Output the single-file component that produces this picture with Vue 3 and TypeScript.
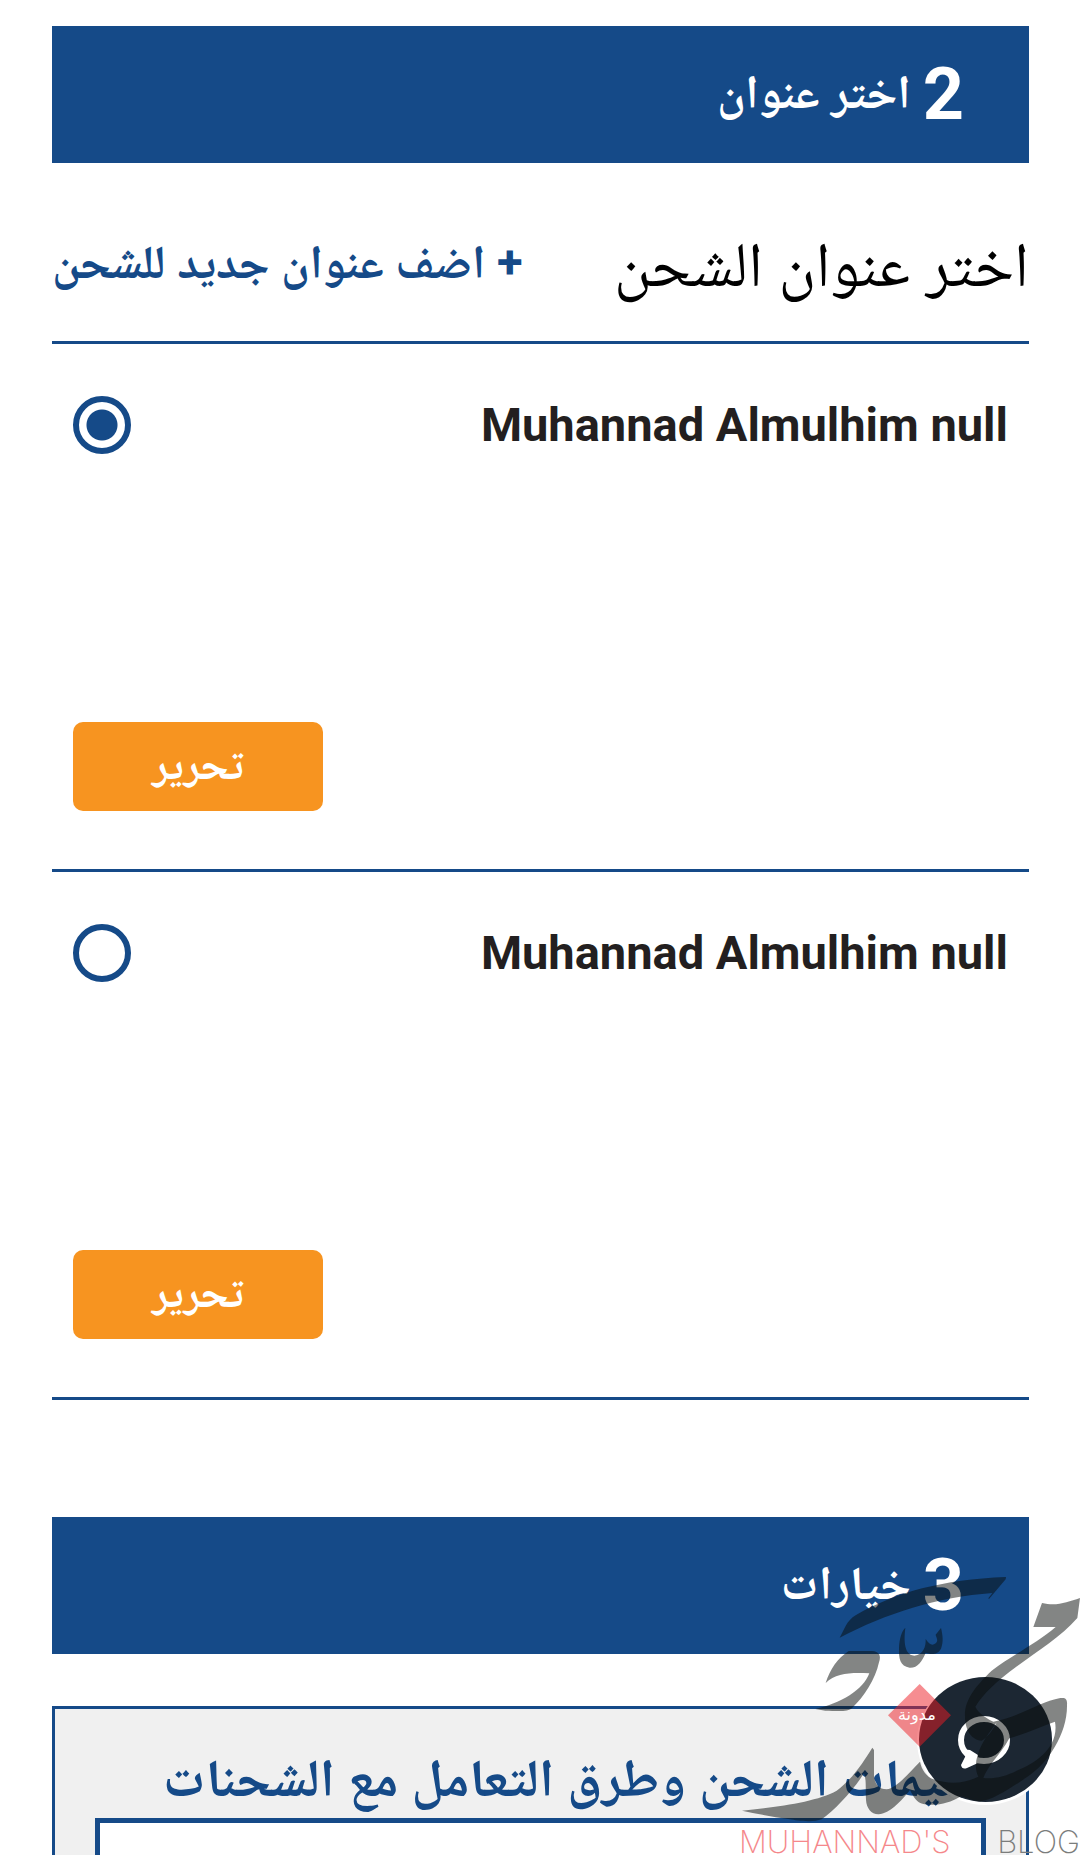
<script setup lang="ts">
import { ref } from 'vue'

interface Address {
  id: number
  name: string
}

const addresses: Address[] = [
  { id: 1, name: 'Muhannad Almulhim null' },
  { id: 2, name: 'Muhannad Almulhim null' },
]

const selected = ref<number>(1)
const instructions = ref<string>('')
</script>

<template>
  <div class="page" dir="rtl" lang="ar">
    <main class="content">
      <h2 class="step"><span class="num">2</span><span class="step-name">اختر عنوان</span></h2>

      <div class="title-row">
        <h3 class="title">اختر عنوان الشحن</h3>
        <a class="add" href="#new-address">+ اضف عنوان جديد للشحن</a>
      </div>

      <ul class="addresses">
        <li v-for="address in addresses" :key="address.id" class="address">
          <div class="address-head">
            <label class="name" :for="`address-${address.id}`">{{ address.name }}</label>
            <input
              :id="`address-${address.id}`"
              v-model="selected"
              class="radio"
              type="radio"
              name="address"
              :value="address.id"
            />
          </div>
          <button class="edit" type="button">تحرير</button>
        </li>
      </ul>

      <h2 class="step"><span class="num">3</span><span class="step-name">خيارات</span></h2>

      <section class="options">
        <label class="options-label" for="instructions">تعليمات الشحن وطرق التعامل مع الشحنات</label>
        <textarea id="instructions" v-model="instructions" class="instructions"></textarea>
      </section>
    </main>

    <button class="chat" type="button" aria-label="الدردشة">
      <svg viewBox="0 0 54 54" width="54" height="54" aria-hidden="true">
        <ellipse cx="26" cy="24" rx="23" ry="21" fill="none" stroke="#fff" stroke-width="6" />
        <path d="M3 33L8 39L3 49Q4 54 9 52L20 47V39L12 34Z" fill="#fff" />
      </svg>
    </button>

    <div class="watermark" aria-hidden="true">
      <svg class="brush" viewBox="0 0 1080 1065">
        <g fill="#070b09" fill-opacity="0.5" fill-rule="evenodd">
          <path d="M359 413C374 388 378 363 408 345C530 276 665 239 858 231L857 238L807 297L805 295L817 279C650 291 500 340 359 413Z" />
          <path d="M556 383C553 410 548 464 583 467C610 464 618 440 617 417C628 434 637 438 647 430C657 421 648 412 647 404L663 384C668 405 671 425 663 446C653 466 630 463 617 458C606 485 593 504 569 503C540 499 536 475 537 445C538 415 545 394 556 383Z" />
          <path d="M317 549C331 506 353 475 386 453H455C478 454 484 467 477 487C466 538 432 591 397 623C383 637 350 632 316 632L286 627C363 610 430 570 448 520C397 517 348 518 317 549Z" />
          <path d="M457 743L462 750V830C465 850 475 868 500 868C530 865 570 815 600 785C605 810 620 830 640 838C690 855 735 850 775 830C760 800 770 765 785 735C797 710 815 690 830 667C820 690 800 715 785 722C755 720 735 690 735 650C732 600 770 555 815 512C870 470 950 430 1007 381H940L966 309C1010 320 1042 306 1080 294L1072 354C1023 410 956 451 889 500C830 543 790 580 766 620C775 640 800 655 820 665C900 650 960 605 1021 594C1040 592 1042 600 1041 616C1042 700 985 790 920 832C870 865 820 900 780 904C760 905 730 888 720 890C690 908 650 920 610 912C590 908 580 890 570 870C550 895 520 930 490 940C460 950 440 930 438 900C436 870 440 840 432 820C400 870 345 930 305 958C280 968 230 962 210 958C160 950 110 942 66 932C180 920 290 905 350 872C400 835 430 785 457 743ZM868 715C920 700 960 680 1005 665C1018 740 950 790 890 812C860 828 820 838 790 834C795 820 805 805 815 790C835 765 855 740 868 715Z" />
        </g>
        <path d="M599 552L693 646L599 740L504 646Z" fill="#ed1c24" fill-opacity="0.5" />
      </svg>
      <span class="tag">مدونة</span>
      <span class="brand"><span class="brand-red">MUHANNAD'S</span><span class="brand-gray">BLOG</span></span>
    </div>
  </div>
</template>

<style>
body {
  margin: 0;
  background: #fff;
}
</style>

<style scoped>
.page {
  position: relative;
  height: 100vh;
  overflow: hidden;
  background: #fff;
  color: #231f20;
  font-family: Roboto, "Noto Naskh Arabic", "DejaVu Sans", sans-serif;
}

.content {
  padding: 26px 51px 0 52px;
}

.step {
  display: flex;
  align-items: center;
  gap: 12px;
  height: 137px;
  margin: 0;
  padding: 0 65px;
  background: #154a88;
  color: #fff;
  font-size: 47px;
  font-weight: 700;
  line-height: 72px;
}

.step-name {
  padding-bottom: 6px;
}

.num {
  font-size: 72px;
}

.title-row {
  display: flex;
  align-items: center;
  justify-content: space-between;
  height: 178px;
  border-bottom: 3px solid #154a88;
}

.title {
  margin: 0;
  padding-top: 40px;
  color: #000;
  font-size: 63px;
  font-weight: 400;
  white-space: nowrap;
}

.add {
  padding-top: 32px;
  color: #154a88;
  font-size: 47px;
  font-weight: 700;
  text-decoration: none;
  white-space: nowrap;
}

.addresses {
  margin: 0 0 117px;
  padding: 0;
  list-style: none;
}

.address {
  display: flex;
  flex-direction: column;
  justify-content: space-between;
  align-items: flex-end;
  box-sizing: border-box;
  height: 528px;
  padding: 52px 21px 58px;
  border-bottom: 3px solid #154a88;
}

.address-head {
  display: flex;
  align-items: center;
  justify-content: space-between;
  width: 100%;
}

.name {
  font-size: 47px;
  font-weight: 700;
  line-height: 58px;
}

.radio {
  appearance: none;
  box-sizing: border-box;
  width: 58px;
  height: 58px;
  margin: 0;
  border: 6px solid #154a88;
  border-radius: 50%;
  background: #fff;
}

.radio:checked {
  background: radial-gradient(circle, #154a88 15px, #fff 16px);
}

.edit {
  width: 250px;
  height: 89px;
  padding: 6px 0 0;
  border: 0;
  border-radius: 10px;
  background: #f79420;
  color: #fff;
  font-family: inherit;
  font-size: 43px;
  font-weight: 700;
}

.options {
  display: flex;
  flex-direction: column;
  margin-top: 52px;
  padding: 29px 30px 40px;
  border: 3px solid #154a88;
  background: #f0f0f0;
}

.options-label {
  height: 80px;
  color: #154a88;
  font-size: 53px;
  font-weight: 700;
  line-height: 80px;
  white-space: nowrap;
}

.instructions {
  box-sizing: border-box;
  height: 160px;
  margin: 0 10px;
  border: 5px solid #154a88;
  background: #fff;
  font: inherit;
  resize: none;
}

.chat {
  position: absolute;
  right: 28px;
  bottom: 53px;
  display: flex;
  align-items: center;
  justify-content: center;
  width: 133px;
  height: 125px;
  padding: 6px 2px 0 0;
  border: 0;
  border-radius: 50%;
  background: #1c2733;
  box-shadow: 0 1px 0 2px #fff;
}

.watermark {
  position: absolute;
  right: 0;
  bottom: 0;
  width: 360px;
  height: 355px;
  pointer-events: none;
}

.brush {
  display: block;
  width: 100%;
}

.tag {
  position: absolute;
  top: 205px;
  left: 178px;
  color: #fff;
  font-family: "DejaVu Sans", sans-serif;
  font-size: 16px;
  line-height: 20px;
}

.brand {
  position: absolute;
  right: 0;
  bottom: 0;
  left: 19px;
  display: flex;
  justify-content: space-between;
  direction: ltr;
  font-family: Inter, sans-serif;
  font-size: 31px;
  font-weight: 200;
  line-height: 26px;
  white-space: nowrap;
}

.brand-red {
  color: #f5888b;
}

.brand-gray {
  color: #7b7d7c;
}
</style>
